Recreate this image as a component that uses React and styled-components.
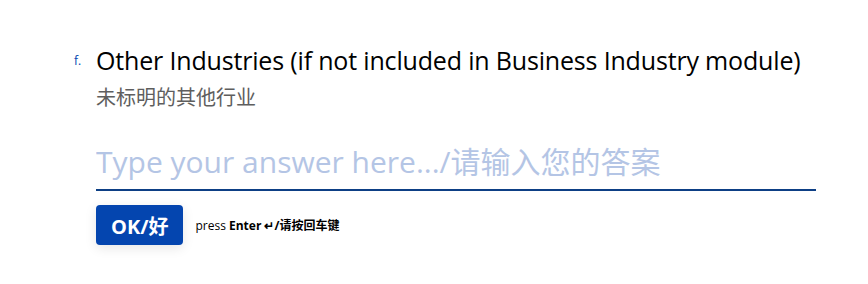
import React, { useState } from "react";
import styled, { createGlobalStyle } from "styled-components";

const GlobalStyle = createGlobalStyle`
  html, body {
    margin: 0;
    padding: 0;
    background: #ffffff;
  }
  body {
    font-family: "Open Sans", "Noto Sans CJK SC", sans-serif;
  }
`;

const App = () => {
  const [answer, setAnswer] = useState("");

  return (
    <>
      <GlobalStyle />
      <Page>
        <Question>
          <Counter>f.</Counter>
          <Body>
            <Title>Other Industries (if not included in Business Industry module)</Title>
            <Subtitle>未标明的其他行业</Subtitle>
            <AnswerInput
              value={answer}
              onChange={(e) => setAnswer(e.target.value)}
              placeholder="Type your answer here.../请输入您的答案"
            />
            <Actions>
              <OkButton>OK/好</OkButton>
              <Hint>
                press <b>Enter ↵/请按回车键</b>
              </Hint>
            </Actions>
          </Body>
        </Question>
      </Page>
    </>
  );
};

export default App;

const Page = styled.div`
  width: 868px;
  height: 284px;
  padding: 44px 0 0 74px;
  box-sizing: border-box;
`;

const Question = styled.div`
  display: flex;
  align-items: flex-start;
`;

const Counter = styled.div`
  width: 22px;
  padding-top: 9px;
  font-size: 12px;
  line-height: 16px;
  color: #0445af;
`;

const Body = styled.div`
  width: 720px;
  display: flex;
  flex-direction: column;
`;

const Title = styled.div`
  font-size: 25px;
  line-height: 32px;
  color: #000000;
  letter-spacing: -0.17px;
  white-space: nowrap;
`;

const Subtitle = styled.div`
  margin-top: 8px;
  font-size: 20px;
  line-height: 28px;
  color: #5e5e5e;
`;

const AnswerInput = styled.input`
  margin-top: 30px;
  width: 100%;
  box-sizing: border-box;
  border: none;
  border-bottom: 2px solid #0d3f85;
  outline: none;
  padding: 0 0 7px;
  font-family: "Open Sans", "Noto Sans CJK SC", sans-serif;
  font-size: 30px;
  line-height: 40px;
  color: #0445af;
  background: transparent;
  &::placeholder {
    color: #b4c5e5;
  }
`;

const Actions = styled.div`
  margin-top: 14px;
  display: flex;
  align-items: center;
  gap: 12px;
`;

const OkButton = styled.button`
  height: 40px;
  padding: 0 15px;
  border: none;
  border-radius: 4px;
  background: #0445af;
  color: #ffffff;
  font-family: "Open Sans", "Noto Sans CJK SC", sans-serif;
  font-size: 20px;
  font-weight: 700;
  box-shadow: 0 3px 12px rgba(0, 0, 0, 0.1);
  cursor: pointer;
`;

const Hint = styled.div`
  font-size: 12px;
  color: #000000;
  b {
    font-weight: 700;
  }
`;
